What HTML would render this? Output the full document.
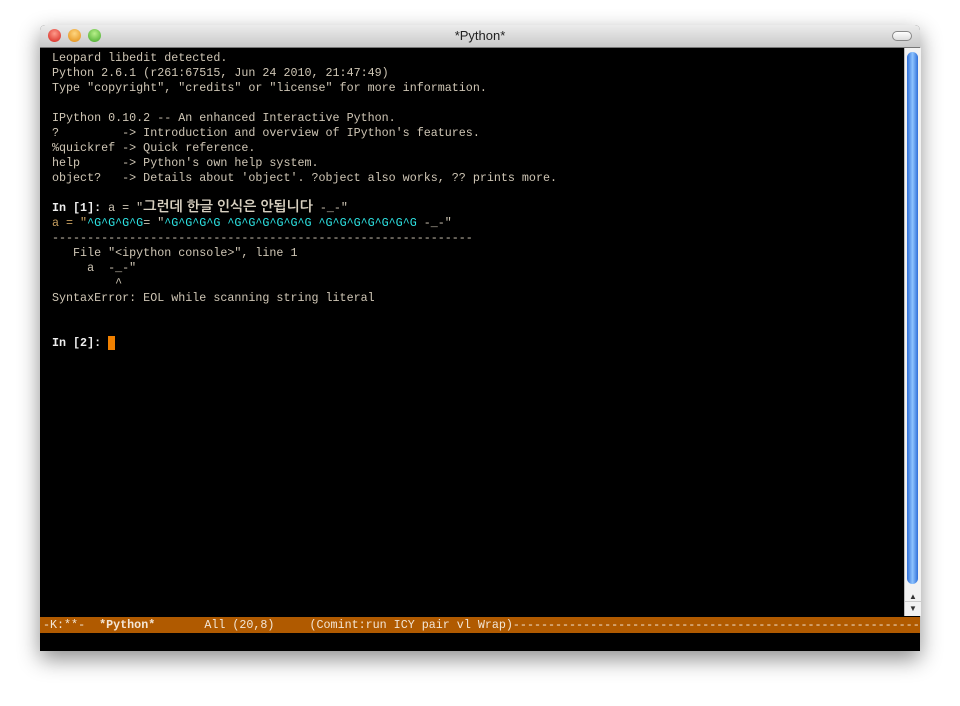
<!DOCTYPE html>
<html><head><meta charset="utf-8"><style>
body{margin:0;width:960px;height:706px;background:#fff;position:relative;overflow:hidden}
.win{position:absolute;left:40px;top:25px;width:880px;height:626px;background:#000;box-shadow:0 8px 22px rgba(0,0,0,.45);border-radius:5px 5px 0 0}
.tb{position:absolute;left:0;top:0;width:880px;height:22px;background:linear-gradient(#ececec,#c9c9c9);border-radius:5px 5px 0 0;border-bottom:1px solid #777;font:13px "Liberation Sans",sans-serif;text-align:center;line-height:22px;color:#222}
.dot{position:absolute;top:4px;width:13px;height:13px;border-radius:50%}
.pill{position:absolute;right:8px;top:6px;width:18px;height:8px;border:1px solid #888;border-radius:5px;background:linear-gradient(#fff,#ddd)}
.txt{position:absolute;left:12px;top:26px;font:11.7px/15px "Liberation Mono","NanumGothic",monospace;color:#cfc6b5;white-space:pre;margin:0}
.b{font-weight:bold}
.k{font:bold 14px/0 "NanumGothic","Noto Sans CJK KR",sans-serif;color:#d8d0c0}
.cy{color:#2ee6e6}
.sb{position:absolute;left:864px;top:23px;width:16px;height:568px;background:#f2f2f2;border-left:1px solid #bbb}
.th{position:absolute;left:2px;top:4px;width:11px;height:532px;border-radius:6px;background:linear-gradient(90deg,#2f6fd8,#8ec4ff 50%,#2f6fd8)}
.ml{position:absolute;left:0;top:592px;width:880px;height:16px;background:#b05a00;font:11.7px/16px "Liberation Mono",monospace;color:#f3e6d6;white-space:pre;overflow:hidden;padding-left:3px;box-sizing:border-box}
</style></head><body>
<div class="win">
<div class="tb">*Python*
<div class="dot" style="left:8px;background:radial-gradient(circle at 50% 35%,#ff9a8a,#d2201a)"></div>
<div class="dot" style="left:28px;background:radial-gradient(circle at 50% 35%,#ffd680,#e08a10)"></div>
<div class="dot" style="left:48px;background:radial-gradient(circle at 50% 35%,#b8f08a,#3fa526)"></div>
<div class="pill"></div></div>
<pre class="txt">Leopard libedit detected.
Python 2.6.1 (r261:67515, Jun 24 2010, 21:47:49)
Type "copyright", "credits" or "license" for more information.

IPython 0.10.2 -- An enhanced Interactive Python.
?         -> Introduction and overview of IPython's features.
%quickref -> Quick reference.
help      -> Python's own help system.
object?   -> Details about 'object'. ?object also works, ?? prints more.

<span class="b" style="color:#eee">In [1]: </span>a = "<span class="k">그런데 한글 인식은 안됩니다</span> -_-"
<span style="color:#c8a060">a = "</span><span class="cy">^G^G^G^G</span>= "<span class="cy">^G^G^G^G ^G^G^G^G^G^G ^G^G^G^G^G^G^G</span> -_-"
------------------------------------------------------------
   File "&lt;ipython console&gt;", line 1
     a  -_-"
         ^
SyntaxError: EOL while scanning string literal


<span class="b" style="color:#eee">In [2]: </span><span style="background:#f08000">&nbsp;</span></pre>
<div class="sb"><div class="th"></div>
<div style="position:absolute;top:544px;left:4px;font:8px sans-serif;color:#333">▲</div>
<div style="position:absolute;top:553px;left:0;width:16px;border-top:1px solid #ccc"></div>
<div style="position:absolute;top:556px;left:4px;font:8px sans-serif;color:#333">▼</div></div>
<div class="ml">-K:**-  <b>*Python*</b>       All (20,8)     (Comint:run ICY pair vl Wrap)----------------------------------------------------------------</div>
</div>
</body></html>
